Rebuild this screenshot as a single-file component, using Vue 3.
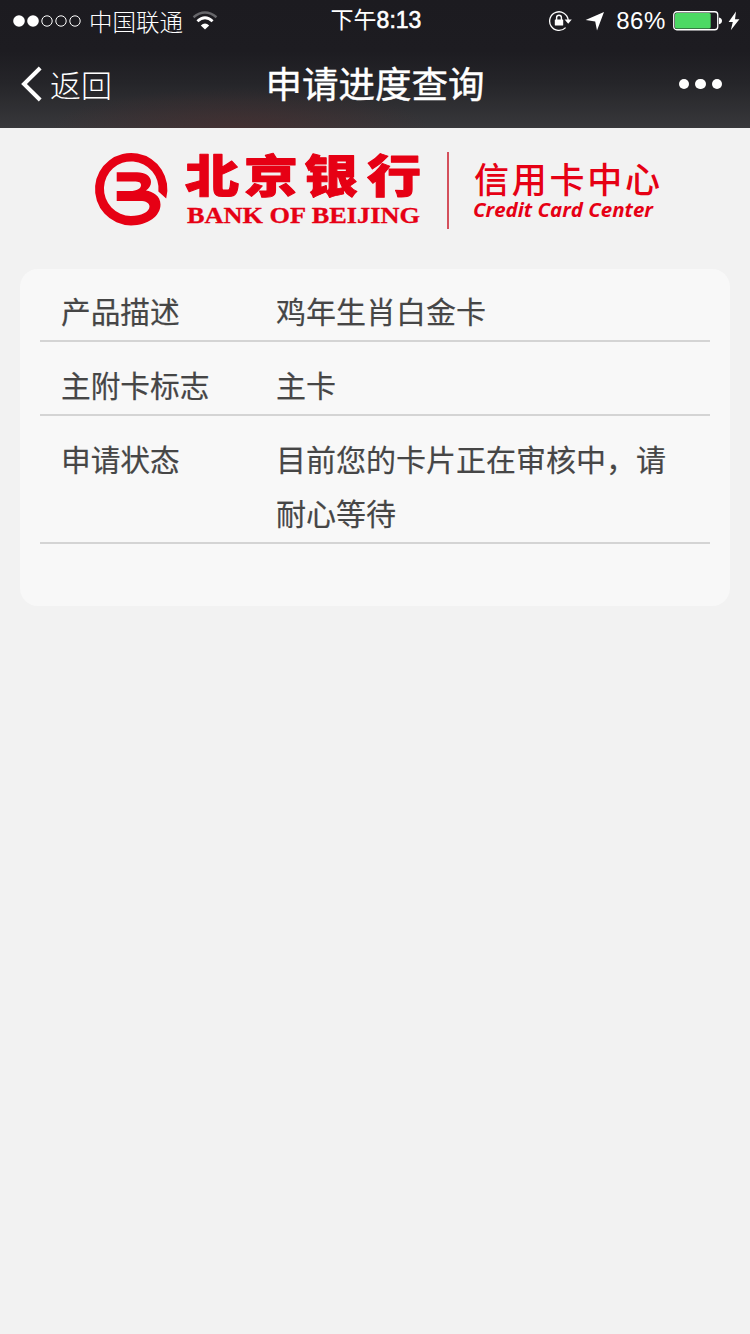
<template>
  <div class="page">
    <header class="top">
      <div class="status-bar">
        <div class="status-left">
          <svg class="signal" width="70" height="14" viewBox="0 0 70 14">
            <circle
              v-for="n in 5"
              :key="n"
              :cx="n * 14 - 7"
              cy="7"
              :r="n <= signal ? 5.8 : 5.2"
              :fill="n <= signal ? '#fff' : 'none'"
              stroke="#fff"
              :stroke-width="n <= signal ? 0 : 1"
            />
          </svg>
          <span class="carrier">中国联通</span>
          <svg class="wifi" width="26" height="20" viewBox="0 0 26 20">
            <path d="M1.5 6.2Q13-3.2 24.5 6.2" fill="none" stroke="#66666a" stroke-width="2.4" />
            <path d="M5.4 10.2Q13 3.4 20.6 10.2" fill="none" stroke="#fff" stroke-width="2.8" />
            <path d="M8.8 14.4Q13 10.4 17.2 14.4L13 18.6z" fill="#fff" />
          </svg>
        </div>
        <div class="status-time">下午<span>8:13</span></div>
        <div class="status-right">
          <svg class="lock" width="24" height="22" viewBox="0 0 24 22">
            <path d="M17.6 17.6A9.3 9.3 0 1 1 20.2 10" fill="none" stroke="#fff" stroke-width="1.3" />
            <path d="M16.6 9.6h7.2l-3.6 4.2z" fill="#fff" />
            <rect x="6.8" y="9.4" width="8.4" height="6.2" rx="0.6" fill="#fff" />
            <path d="M8.6 10V7.6a2.4 2.4 0 0 1 4.8 0V10" fill="none" stroke="#fff" stroke-width="1.4" />
          </svg>
          <svg class="arrow" width="20" height="20" viewBox="0 0 20 20">
            <path d="M19 1L12 19.6L10.2 10.4L0.6 9z" fill="#fff" />
          </svg>
          <span class="percent">{{ battery }}%</span>
          <svg class="battery" width="50" height="20" viewBox="0 0 50 20">
            <rect x="0.75" y="0.75" width="44" height="18" rx="3" fill="none" stroke="#fff" stroke-width="1.3" />
            <rect x="2" y="2" :width="41.5 * battery / 100" height="15.5" rx="1.5" fill="#4cd964" />
            <path d="M46 6.4q3 0.6 3 3.4t-3 3.4z" fill="#fff" />
          </svg>
          <svg class="bolt" width="12" height="20" viewBox="0 0 12 20">
            <path d="M8 0.6L0.6 11h4.2L2.8 19.2L11.4 8.2H7z" fill="#fff" />
          </svg>
        </div>
      </div>
      <nav class="nav-bar">
        <a class="back">
          <svg width="22" height="36" viewBox="0 0 22 36">
            <path d="M20.2 2L4 18L20.2 34" fill="none" stroke="#fff" stroke-width="4" />
          </svg>
          <span>返回</span>
        </a>
        <h1 class="title">申请进度查询</h1>
        <div class="more">
          <i v-for="n in 3" :key="n"></i>
        </div>
      </nav>
    </header>

    <div class="brand">
      <svg width="750" height="141" viewBox="0 128 750 141">
        <path
          fill="#e60014"
          d="M166.2 198.4A36.2 36.2 0 1 0 131 225.4C148 225.4 160.5 216 160.5 204.5C160.5 196 153 191.5 146 190.5C149 188.5 151 185.500 151 182C151 176 145 172.3 137 172.3H116.7V181.500H134C139 181.500 141 182.500 141 185C141 188.500 137 191 130 191H116.7V201H140C146 201 149.5 203 149.5 206.5C149.5 212 141 216 131 216A27.3 27.3 0 1 1 158.4 191.500z"
        />
        <g fill="#e60014">
          <text class="bank-cn" transform="translate(0 193) scale(1 0.84)">
            <tspan x="185" y="0">北</tspan><tspan x="244">京</tspan><tspan x="304">银</tspan><tspan x="367">行</tspan>
          </text>
          <text class="bank-en" x="187" y="223" textLength="233" lengthAdjust="spacingAndGlyphs">BANK OF BEIJING</text>
          <text class="center-cn" x="474" y="192.5" textLength="186" lengthAdjust="spacing">信用卡中心</text>
          <text class="center-en" x="473" y="217" textLength="180" lengthAdjust="spacingAndGlyphs">Credit Card Center</text>
        </g>
        <rect x="447" y="152" width="2" height="77" fill="#d4505c" />
      </svg>
    </div>

    <section class="card">
      <div v-for="item in items" :key="item.label" class="row">
        <div class="label">{{ item.label }}</div>
        <div class="value">{{ item.value }}</div>
      </div>
    </section>
  </div>
</template>

<script setup>
import { ref } from 'vue'

const signal = ref(2)
const battery = ref(86)

const items = ref([
  { label: '产品描述', value: '鸡年生肖白金卡' },
  { label: '主附卡标志', value: '主卡' },
  { label: '申请状态', value: '目前您的卡片正在审核中，请耐心等待' }
])
</script>

<style>
body {
  margin: 0;
  background: #f2f2f2;
}
</style>

<style scoped>
.page {
  width: 750px;
  min-height: 1334px;
  background: #f2f2f2;
  font-family: "Liberation Sans", "Noto Sans CJK SC", sans-serif;
}

.top {
  height: 128px;
  color: #fff;
  background:
    radial-gradient(ellipse 190px 40px at 240px 128px, rgba(78, 42, 42, 0.5), transparent),
    linear-gradient(180deg, #1c1b20 0%, #1d1c21 40%, #252529 65%, #38383b 100%);
}

.status-bar {
  display: grid;
  grid-template-columns: 1fr auto 1fr;
  grid-template-rows: 41px;
  align-items: center;
  height: 40px;
  padding: 0 10px 0 12px;
}

.status-left,
.status-right {
  display: flex;
  align-items: center;
}

.status-right {
  justify-content: flex-end;
}

.carrier {
  margin: 0 9px 0 7px;
  font-size: 23.5px;
  font-weight: 300;
  font-family: "Noto Sans CJK SC", sans-serif;
  line-height: 36px;
}

.status-time {
  font-size: 23px;
  line-height: 41px;
}

.status-time span {
  -webkit-text-stroke: 0.6px #fff;
}

.lock {
  margin-right: 1px;
}

.arrow {
  margin: 0 11px 0 12px;
}

.percent {
  font-size: 24px;
  letter-spacing: 0.6px;
  line-height: 41px;
}

.battery {
  margin: 0 5px 0 7px;
}

.nav-bar {
  display: grid;
  grid-template-columns: 1fr auto 1fr;
  align-items: center;
  height: 88px;
  padding: 0 28px 0 20px;
}

.back {
  display: flex;
  align-items: center;
  gap: 8px;
  font-size: 31px;
  line-height: 42px;
  font-weight: 300;
  font-family: "Noto Sans CJK SC", sans-serif;
}

.title {
  margin: 0;
  padding: 4px 0 0 8px;
  font-size: 36.5px;
  font-weight: 400;
  line-height: 84px;
  -webkit-text-stroke: 0.4px #fff;
}

.more {
  display: flex;
  justify-content: flex-end;
  gap: 6px;
}

.more i {
  width: 10.5px;
  height: 10.5px;
  border-radius: 50%;
  background: #fff;
}

.brand {
  height: 141px;
}

.brand svg {
  display: block;
}

.bank-cn {
  font: 900 54px "Noto Sans CJK SC", sans-serif;
  stroke: #e60014;
  stroke-width: 1.2px;
  stroke-linejoin: round;
}

.bank-en {
  font: bold 23px "Liberation Serif", serif;
  stroke: #e60014;
  stroke-width: 0.3px;
}

.center-cn {
  font: 500 35px "Noto Sans CJK SC", sans-serif;
}

.center-en {
  font: italic bold 19px "Open Sans", sans-serif;
}

.card {
  box-sizing: border-box;
  width: 710px;
  height: 337px;
  margin: 0 auto;
  padding: 0 20px;
  border-radius: 18px;
  background: #f8f8f8;
}

.row {
  display: flex;
  padding: 18px 22px 0 21px;
  border-bottom: 2px solid #d4d4d4;
  color: #464646;
  font-size: 30px;
  line-height: 54px;
  -webkit-text-stroke: 0.2px #464646;
}

.row:first-child {
  padding-top: 17px;
}

.label {
  width: 215px;
  font-size: 29.7px;
}

.value {
  flex: 1;
}
</style>
